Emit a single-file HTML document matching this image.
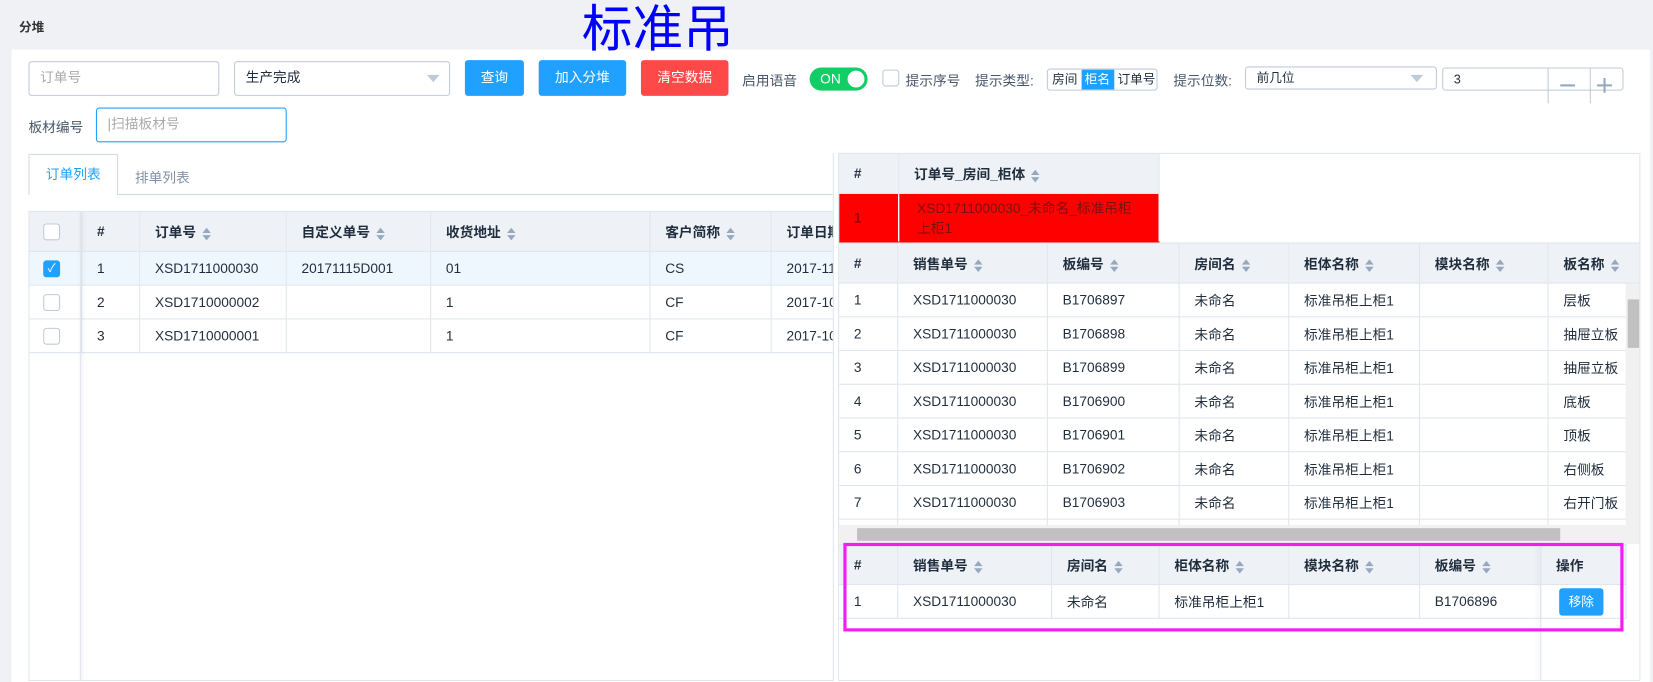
<!DOCTYPE html>
<html><head><meta charset="utf-8"><style>
*{box-sizing:border-box;margin:0;padding:0}
html,body{width:1653px;height:681px;overflow:hidden;background:#f0f1f5}
body{font-family:"Liberation Sans","Noto Sans CJK SC",sans-serif;font-size:13px;color:#333}
#w{position:absolute;left:0;top:0;width:1568px;height:646px;transform:scale(1.05421);transform-origin:0 0;background:#f0f1f5}
.a{position:absolute}
.panel{left:11px;top:47px;width:1554px;height:600px;background:#fff}
.inp{border:1px solid #bfcbd9;border-radius:3px;background:#fff;color:#aaa;padding-left:10px;line-height:30px;height:33px}
.btn{color:#fff;border-radius:3px;text-align:center;line-height:34px;height:34px;font-size:13px}
.blue{background:#20a0ff}.red{background:#ff4949}
.tri{position:absolute;width:0;height:0;border-left:6px solid transparent;border-right:6px solid transparent;border-top:7px solid #bfcbd9}
table{border-collapse:collapse;table-layout:fixed;position:absolute}
td,th{border:1px solid #dfe6ec;padding-left:14px;text-align:left;white-space:nowrap;overflow:hidden;font-weight:normal}
th{background:#eef1f6;font-weight:bold;color:#1f2d3d;height:38px}
td{height:32px;color:#1f2d3d}
.s{display:inline-block;vertical-align:middle;margin-left:6px;width:8px;height:12px;position:relative}
.s:before{content:"";position:absolute;left:0;top:0;border-left:4px solid transparent;border-right:4px solid transparent;border-bottom:5px solid #97a8be}
.s:after{content:"";position:absolute;left:0;top:7px;border-left:4px solid transparent;border-right:4px solid transparent;border-top:5px solid #97a8be}
.cb{display:inline-block;width:16px;height:16px;border:1px solid #bfcbd9;border-radius:3px;background:#fff;vertical-align:middle}
</style></head><body><div id="w">
<div class="a" style="left:18px;top:17px;font-size:12px;font-weight:bold;color:#333">分堆</div>
<div class="panel a"></div>
<div class="a" style="left:552px;top:1px;font-size:48px;line-height:56px;color:#0000ff">标准吊</div>

<div class="a inp" style="left:27px;top:58px;width:181px">订单号</div>
<div class="a inp" style="left:222px;top:58px;width:205px;color:#1f2d3d">生产完成<span class="tri" style="left:182px;top:12px"></span></div>
<div class="a btn blue" style="left:441px;top:57px;width:56px">查询</div>
<div class="a btn blue" style="left:511px;top:57px;width:83px">加入分堆</div>
<div class="a btn red" style="left:608px;top:57px;width:83px">清空数据</div>
<div class="a" style="left:704px;top:66px;color:#48576a">启用语音</div>
<div class="a" style="left:768px;top:64px;width:55px;height:22px;border-radius:11px;background:#13ce66;color:#fff;font-size:13px;line-height:22px;padding-left:10px">ON<span class="a" style="right:3px;top:3px;width:16px;height:16px;border-radius:8px;background:#fff"></span></div>
<div class="a cb" style="left:837px;top:66px"></div>
<div class="a" style="left:859px;top:66px;color:#48576a">提示序号</div>
<div class="a" style="left:925px;top:66px;color:#48576a">提示类型:</div>
<div class="a" style="left:993px;top:65px;width:105px;height:21px;border:1px solid #bfcbd9;border-radius:3px;font-size:12px;line-height:19px;overflow:hidden;color:#1f2d3d">
<span class="a" style="left:4px">房间</span><span class="a" style="left:32px;width:31px;height:19px;background:#20a0ff;color:#fff;padding-left:3px">柜名</span><span class="a" style="left:66px">订单号</span></div>
<div class="a" style="left:1113px;top:66px;color:#48576a">提示位数:</div>
<div class="a inp" style="left:1181px;top:63px;width:182px;height:22px;line-height:20px;font-size:12px;color:#1f2d3d">前几位<span class="tri" style="left:156px;top:7px"></span></div>
<div class="a inp" style="left:1368px;top:64px;width:172px;height:22px;line-height:20px;font-size:12px;color:#1f2d3d">3</div>
<div class="a" style="left:1468px;top:64px;width:1px;height:34px;background:#bfcbd9"></div>
<div class="a" style="left:1508px;top:64px;width:1px;height:34px;background:#bfcbd9"></div>
<div class="a" style="left:1480px;top:80px;width:14px;height:2px;background:#97a8be"></div>
<div class="a" style="left:1515px;top:80px;width:14px;height:2px;background:#97a8be"></div>
<div class="a" style="left:1521px;top:74px;width:2px;height:14px;background:#97a8be"></div>

<div class="a" style="left:27px;top:110px;color:#48576a">板材编号</div>
<div class="a inp" style="left:91px;top:102px;width:181px;border-color:#20a0ff">|扫描板材号</div>

<div class="a" style="left:27px;top:146px;width:85px;height:39px;border:1px solid #d1dbe5;border-bottom:none;background:#fff;color:#20a0ff;line-height:38px;text-align:center;z-index:2">订单列表</div>
<div class="a" style="left:128px;top:158px;color:#8391a5">排单列表</div>
<div class="a" style="left:27px;top:184px;width:763px;height:1px;background:#d1dbe5"></div>

<div class="a" style="left:27px;top:200px;width:763px;height:446px;border:1px solid #dfe6ec;border-right:none;overflow:hidden">
<table style="left:-1px;top:-1px;width:780px">
<colgroup><col style="width:50px"><col style="width:55px"><col style="width:139px"><col style="width:137px"><col style="width:208px"><col style="width:115px"><col style="width:76px"></colgroup>
<tr><th style="padding-left:13px"><span class="cb"></span></th><th>#</th><th>订单号<span class="s"></span></th><th>自定义单号<span class="s"></span></th><th>收货地址<span class="s"></span></th><th>客户简称<span class="s"></span></th><th>订单日期</th></tr>
<tr style="background:#eef6fe"><td style="padding-left:13px"><span class="cb" style="background:#20a0ff;border-color:#20a0ff;color:#fff;font-size:11px;line-height:14px;text-align:center">✓</span></td><td>1</td><td>XSD1711000030</td><td>20171115D001</td><td>01</td><td>CS</td><td>2017-11</td></tr>
<tr><td style="padding-left:13px"><span class="cb"></span></td><td>2</td><td>XSD1710000002</td><td></td><td>1</td><td>CF</td><td>2017-10</td></tr>
<tr><td style="padding-left:13px"><span class="cb"></span></td><td>3</td><td>XSD1710000001</td><td></td><td>1</td><td>CF</td><td>2017-10</td></tr>
</table>
<div class="a" style="left:48px;top:0;width:1px;height:446px;background:#dfe6ec;box-shadow:1px 0 4px rgba(0,0,0,.15)"></div>
</div>

<div class="a" style="left:790px;top:145px;width:1px;height:501px;background:#dfe6ec"></div>
<div class="a" style="left:795px;top:145px;width:761px;height:501px;border:1px solid #dfe6ec;overflow:hidden">
<table style="left:-1px;top:-1px;width:305px">
<colgroup><col style="width:57px"><col style="width:247px"></colgroup>
<tr><th>#</th><th>订单号_房间_柜体<span class="s"></span></th></tr>
<tr style="background:#ff0000"><td style="height:46px;color:#600;border-color:#ff0000 #fff">1</td><td style="white-space:normal;line-height:19px;color:#7a1010;border-color:#ff0000 #fff;padding-left:17px;padding-right:18px">XSD1711000030_未命名_标准吊柜上柜1</td></tr>
</table>
<div class="a" style="left:0;top:84px;width:761px;height:286px;overflow:hidden">
<table style="left:-1px;top:0;width:760px">
<colgroup><col style="width:56px"><col style="width:142px"><col style="width:125px"><col style="width:104px"><col style="width:124px"><col style="width:122px"><col style="width:87px"></colgroup>
<tr><th>#</th><th>销售单号<span class="s"></span></th><th>板编号<span class="s"></span></th><th>房间名<span class="s"></span></th><th>柜体名称<span class="s"></span></th><th>模块名称<span class="s"></span></th><th>板名称<span class="s"></span></th></tr>
<tr><td>1</td><td>XSD1711000030</td><td>B1706897</td><td>未命名</td><td>标准吊柜上柜1</td><td></td><td>层板</td></tr>
<tr><td>2</td><td>XSD1711000030</td><td>B1706898</td><td>未命名</td><td>标准吊柜上柜1</td><td></td><td>抽屉立板</td></tr>
<tr><td>3</td><td>XSD1711000030</td><td>B1706899</td><td>未命名</td><td>标准吊柜上柜1</td><td></td><td>抽屉立板</td></tr>
<tr><td>4</td><td>XSD1711000030</td><td>B1706900</td><td>未命名</td><td>标准吊柜上柜1</td><td></td><td>底板</td></tr>
<tr><td>5</td><td>XSD1711000030</td><td>B1706901</td><td>未命名</td><td>标准吊柜上柜1</td><td></td><td>顶板</td></tr>
<tr><td>6</td><td>XSD1711000030</td><td>B1706902</td><td>未命名</td><td>标准吊柜上柜1</td><td></td><td>右侧板</td></tr>
<tr><td>7</td><td>XSD1711000030</td><td>B1706903</td><td>未命名</td><td>标准吊柜上柜1</td><td></td><td>右开门板</td></tr>
<tr><td>8</td><td></td><td></td><td></td><td></td><td></td><td></td></tr>
</table>
<div class="a" style="left:746px;top:39px;width:15px;height:229px;background:#f1f1f1"></div>
<div class="a" style="left:748px;top:54px;width:11px;height:46px;background:#c1c1c1"></div>
<div class="a" style="left:0;top:268px;width:761px;height:18px;background:#f1f1f1"></div>
<div class="a" style="left:17px;top:271px;width:667px;height:12px;background:#c1c1c1"></div>
</div>
<div class="a" style="left:0;top:370px;width:761px;height:140px;background:#fff">
<table style="left:-1px;top:0;width:747px">
<colgroup><col style="width:56px"><col style="width:146px"><col style="width:102px"><col style="width:123px"><col style="width:124px"><col style="width:115px"><col style="width:81px"></colgroup>
<tr><th>#</th><th>销售单号<span class="s"></span></th><th>房间名<span class="s"></span></th><th>柜体名称<span class="s"></span></th><th>模块名称<span class="s"></span></th><th>板编号<span class="s"></span></th><th>操作</th></tr>
<tr><td>1</td><td>XSD1711000030</td><td>未命名</td><td>标准吊柜上柜1</td><td></td><td>B1706896</td><td style="padding-left:17px"><span style="display:inline-block;width:42px;height:26px;line-height:26px;text-align:center;background:#20a0ff;color:#fff;border-radius:3px;font-size:12px">移除</span></td></tr>
</table>
<div class="a" style="left:665px;top:0;width:1px;height:140px;background:#dfe6ec;box-shadow:-2px 0 4px rgba(0,0,0,.12)"></div>
</div>
</div>
<div class="a" style="left:800px;top:515px;width:740px;height:84px;border:3px solid #f01ef0"></div>
</div></body></html>
